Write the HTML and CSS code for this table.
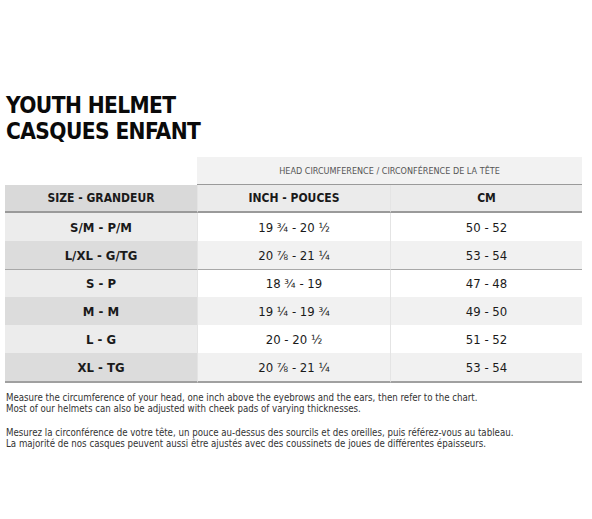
FILE: index.html
```html
<!DOCTYPE html>
<html lang="en">
<head>
<meta charset="utf-8">
<title>Youth Helmet</title>
<link rel="stylesheet" href="styles.css">
</head>
<body>
<div class="page">
  <h1 class="title">YOUTH HELMET<br>CASQUES ENFANT</h1>
  <div class="chart">
    <div class="blank"></div>
    <div class="group">HEAD CIRCUMFERENCE / CIRCONFÉRENCE DE LA TÊTE</div>

    <div class="cell head first">SIZE - GRANDEUR</div>
    <div class="cell head">INCH - POUCES</div>
    <div class="cell head">CM</div>

    <div class="cell size first">S/M - P/M</div>
    <div class="cell">19 ¾ - 20 ½</div>
    <div class="cell">50 - 52</div>

    <div class="cell size first alt">L/XL - G/TG</div>
    <div class="cell alt">20 ⅞ - 21 ¼</div>
    <div class="cell alt">53 - 54</div>

    <div class="cell size first sep">S - P</div>
    <div class="cell sep">18 ¾ - 19</div>
    <div class="cell sep">47 - 48</div>

    <div class="cell size first alt">M - M</div>
    <div class="cell alt">19 ¼ - 19 ¾</div>
    <div class="cell alt">49 - 50</div>

    <div class="cell size first">L - G</div>
    <div class="cell">20 - 20 ½</div>
    <div class="cell">51 - 52</div>

    <div class="cell size first alt last">XL - TG</div>
    <div class="cell alt last">20 ⅞ - 21 ¼</div>
    <div class="cell alt last">53 - 54</div>
  </div>
  <div class="notes">
    <p>Measure the circumference of your head, one inch above the eyebrows and the ears, then refer to the chart.<br>Most of our helmets can also be adjusted with cheek pads of varying thicknesses.</p>
    <p>Mesurez la circonférence de votre tête, un pouce au-dessus des sourcils et des oreilles, puis référez-vous au tableau.<br>La majorité de nos casques peuvent aussi être ajustés avec des coussinets de joues de différentes épaisseurs.</p>
  </div>
</div>
</body>
</html>
```

FILE: styles.css
```css
html, body {
  margin: 0;
  padding: 0;
  background: #ffffff;
}

.page {
  padding: 0 10px 0 5px;
  font-family: "DejaVu Sans Condensed", "DejaVu Sans", sans-serif;
  color: #111;
}

.title {
  margin: 92px 0 0 1px;
  font-size: 22.5px;
  line-height: 26px;
  font-weight: bold;
  color: #0a0a0a;
  letter-spacing: -0.6px;
}

.chart {
  margin-top: 13px;
  display: grid;
  grid-template-columns: 192px 193px 192px;
}

.blank {
  background: #fff;
}

.group {
  grid-column: 2 / span 2;
  height: 28px;
  display: flex;
  align-items: center;
  justify-content: center;
  background: #f2f2f2;
  border-bottom: 1px solid #9a9a9a;
  font-size: 9px;
  color: #555;
  box-sizing: border-box;
}

.cell {
  height: 28px;
  display: flex;
  align-items: center;
  justify-content: center;
  font-size: 13px;
  color: #1a1a1a;
  background: #ffffff;
  box-sizing: border-box;
}

.cell + .cell {
  border-left: 1px solid #e4e4e4;
}

.cell.first {
  background: #ececec;
  border-left: none;
}

.cell.alt {
  background: #f1f1f1;
}

.cell.first.alt {
  background: #dcdcdc;
}

.cell.head {
  background: #ebebeb;
  font-weight: bold;
  font-size: 12px;
  border-bottom: 2px solid #9a9a9a;
  height: 28px;
}

.cell.head.first {
  background: #d9d9d9;
}

.cell.size {
  font-weight: bold;
}

.cell.sep {
  border-top: 1px solid #a8a8a8;
}

.cell.last {
  border-bottom: 2px solid #a0a0a0;
  height: 30px;
}

.notes {
  margin: 9px 0 0 1px;
  font-size: 9.65px;
  line-height: 11px;
  color: #333;
}

.notes p {
  margin: 0 0 13px 0;
}
```
